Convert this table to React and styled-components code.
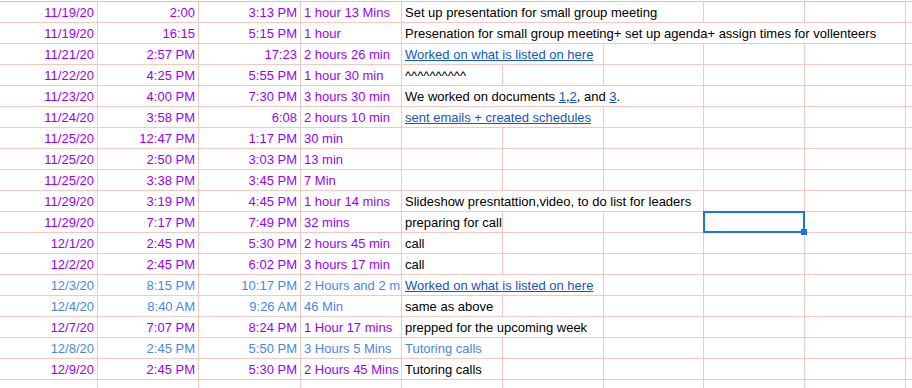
import React from 'react'
import styled, { createGlobalStyle } from 'styled-components'

const GlobalStyle = createGlobalStyle`
  html, body {
    margin: 0;
    padding: 0;
    background: #fff;
    overflow: hidden;
  }
`

const PURPLE = '#9900ff'
const SKY = '#4a86e8'
const LINK = '#1155cc'
const LINE = '#f4c7c3'

const Sheet = styled.div`
  width: 912px;
  height: 388px;
  overflow: hidden;
  padding-top: 1px;
  font-family: Arial, "Liberation Sans", sans-serif;
  font-size: 13px;
`

const Grid = styled.div`
  display: grid;
  grid-template-columns: 98px 101px 102px 101px 101px 101px 100px 101px 101px 1fr;
  grid-auto-rows: 21px;
  border-top: 1px solid #c7c7c7;
`

const Cell = styled.div`
  position: relative;
  box-sizing: border-box;
  border-right: 1px solid ${LINE};
  border-bottom: 1px solid ${LINE};
  padding: 1px 3px 0;
  line-height: 19px;
  white-space: nowrap;
  overflow: ${p => (p.$clip ? 'hidden' : 'visible')};
  text-align: ${p => (p.$right ? 'right' : 'left')};
  color: ${p => p.$tone || '#000'};
  grid-column: span ${p => p.$span || 1};

  ${p =>
    p.$selected &&
    `
    overflow: visible;
    &::after {
      content: '';
      position: absolute;
      left: -1px;
      top: -1px;
      width: 102px;
      height: 22px;
      box-sizing: border-box;
      border: 2px solid #1a73e8;
    }
    &::before {
      content: '';
      position: absolute;
      left: 97px;
      top: 17px;
      width: 6px;
      height: 6px;
      background: #1a73e8;
      z-index: 1;
    }
  `}
`

const Link = styled.a`
  color: ${LINK};
  text-decoration: underline;
`

const rows = [
  { date: '11/19/20', start: '2:00', end: '3:13 PM', dur: '1 hour 13 Mins', desc: 'Set up presentation for small group meeting', span: 3 },
  { date: '11/19/20', start: '16:15', end: '5:15 PM', dur: '1 hour', desc: 'Presenation for small group meeting+ set up agenda+ assign times for vollenteers', span: 5 },
  { date: '11/21/20', start: '2:57 PM', end: '17:23', dur: '2 hours 26 min', desc: <Link>Worked on what is listed on here</Link>, span: 2 },
  { date: '11/22/20', start: '4:25 PM', end: '5:55 PM', dur: '1 hour 30 min', desc: '^^^^^^^^^^' },
  {
    date: '11/23/20', start: '4:00 PM', end: '7:30 PM', dur: '3 hours 30 min', span: 3,
    desc: <>We worked on documents <Link>1</Link>,<Link>2</Link>, and <Link>3</Link>.</>,
  },
  { date: '11/24/20', start: '3:58 PM', end: '6:08', dur: '2 hours 10 min', desc: <Link>sent emails + created schedules</Link>, span: 2 },
  { date: '11/25/20', start: '12:47 PM', end: '1:17 PM', dur: '30 min' },
  { date: '11/25/20', start: '2:50 PM', end: '3:03 PM', dur: '13 min' },
  { date: '11/25/20', start: '3:38 PM', end: '3:45 PM', dur: '7 Min' },
  { date: '11/29/20', start: '3:19 PM', end: '4:45 PM', dur: '1 hour 14 mins', desc: 'Slideshow presntattion,video, to do list for leaders', span: 3 },
  { date: '11/29/20', start: '7:17 PM', end: '7:49 PM', dur: '32 mins', desc: 'preparing for call', selected: 7 },
  { date: '12/1/20', start: '2:45 PM', end: '5:30 PM', dur: '2 hours 45 min', desc: 'call' },
  { date: '12/2/20', start: '2:45 PM', end: '6:02 PM', dur: '3 hours 17 min', desc: 'call' },
  { date: '12/3/20', start: '8:15 PM', end: '10:17 PM', dur: '2 Hours and 2 m', desc: <Link>Worked on what is listed on here</Link>, span: 2, tone: SKY },
  { date: '12/4/20', start: '8:40 AM', end: '9:26 AM', dur: '46 Min', desc: 'same as above', tone: SKY },
  { date: '12/7/20', start: '7:07 PM', end: '8:24 PM', dur: '1 Hour 17 mins', desc: 'prepped for the upcoming week', span: 2 },
  { date: '12/8/20', start: '2:45 PM', end: '5:50 PM', dur: '3 Hours 5 Mins', desc: 'Tutoring calls', tone: SKY, descTone: SKY },
  { date: '12/9/20', start: '2:45 PM', end: '5:30 PM', dur: '2 Hours 45 Mins', desc: 'Tutoring calls' },
  {},
]

const TOTAL = 10

const Row = ({ row }) => {
  const tone = row.date ? row.tone || PURPLE : undefined
  const span = row.span || 1
  const rest = TOTAL - 4 - span
  return (
    <>
      <Cell $right $tone={tone}>{row.date}</Cell>
      <Cell $right $tone={tone}>{row.start}</Cell>
      <Cell $right $tone={tone}>{row.end}</Cell>
      <Cell $clip $tone={tone}>{row.dur}</Cell>
      <Cell $span={span} $tone={row.descTone}>{row.desc}</Cell>
      {Array.from({ length: rest }).map((_, i) => (
        <Cell key={i} $selected={row.selected === 4 + span + i} />
      ))}
    </>
  )
}

export default function App() {
  return (
    <Sheet>
      <GlobalStyle />
      <Grid>
        {rows.map((r, i) => (
          <Row key={i} row={r} />
        ))}
      </Grid>
    </Sheet>
  )
}
